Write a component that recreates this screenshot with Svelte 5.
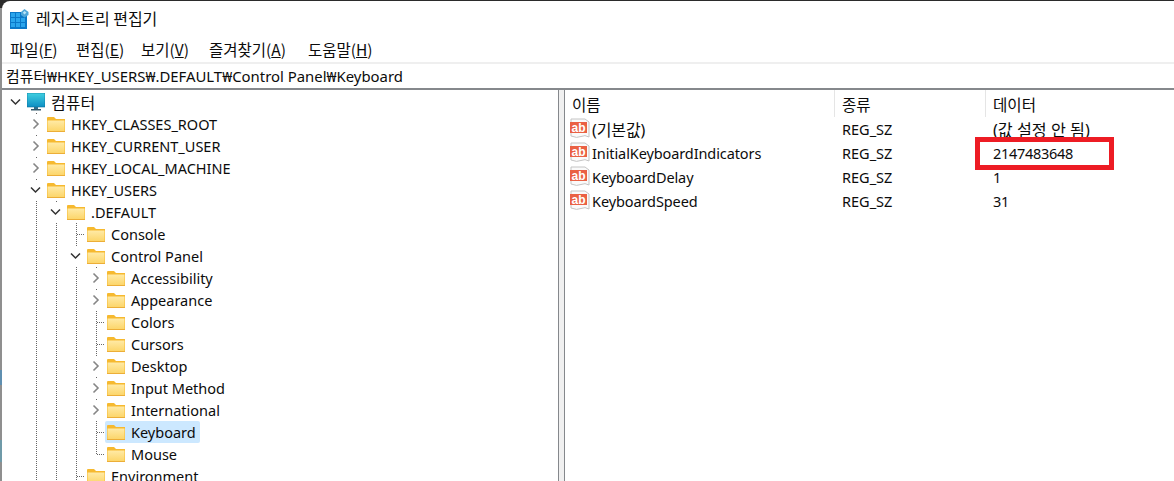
<script>
  const rows = [
    { l: 0, t: '컴퓨터', e: 'open', g: [], icon: 'pc' },
    { l: 1, t: 'HKEY_CLASSES_ROOT', e: 'closed', g: [], own: 'v' },
    { l: 1, t: 'HKEY_CURRENT_USER', e: 'closed', g: [], own: 'v' },
    { l: 1, t: 'HKEY_LOCAL_MACHINE', e: 'closed', g: [], own: 'v' },
    { l: 1, t: 'HKEY_USERS', e: 'open', g: [], own: 'v' },
    { l: 2, t: '.DEFAULT', e: 'open', g: [1], own: 'v' },
    { l: 3, t: 'Console', g: [1, 2], own: 'vh' },
    { l: 3, t: 'Control Panel', e: 'open', g: [1, 2], own: 'v' },
    { l: 4, t: 'Accessibility', e: 'closed', g: [1, 2, 3], own: 'v' },
    { l: 4, t: 'Appearance', e: 'closed', g: [1, 2, 3], own: 'v' },
    { l: 4, t: 'Colors', g: [1, 2, 3], own: 'vh' },
    { l: 4, t: 'Cursors', g: [1, 2, 3], own: 'vh' },
    { l: 4, t: 'Desktop', e: 'closed', g: [1, 2, 3], own: 'v' },
    { l: 4, t: 'Input Method', e: 'closed', g: [1, 2, 3], own: 'v' },
    { l: 4, t: 'International', e: 'closed', g: [1, 2, 3], own: 'v' },
    { l: 4, t: 'Keyboard', g: [1, 2, 3], own: 'vh', sel: true },
    { l: 4, t: 'Mouse', g: [1, 2, 3], own: 'last' },
    { l: 3, t: 'Environment', g: [1, 2], own: 'vh' }
  ];
  const menus = [
    ['파일', 'F'],
    ['편집', 'E'],
    ['보기', 'V'],
    ['즐겨찾기', 'A'],
    ['도움말', 'H']
  ];
  const values = [
    { n: '(기본값)', d: '(값 설정 안 됨)', ko: true },
    { n: 'InitialKeyboardIndicators', d: '2147483648' },
    { n: 'KeyboardDelay', d: '1' },
    { n: 'KeyboardSpeed', d: '31' }
  ];
</script>

<div class="desk">
  <div class="win">
    <header class="title">
      <svg class="regicon" width="19" height="19" viewBox="0 0 19 19">
        <rect x="0" y="3" width="17" height="17" fill="#0a78c8" />
        <g fill="#2aa5ec">
          <rect x="1" y="4" width="4" height="4" /><rect x="6" y="4" width="4" height="4" />
          <rect x="1" y="9" width="4" height="4" /><rect x="6" y="9" width="4" height="4" /><rect x="11" y="9" width="4" height="4" />
          <rect x="1" y="14" width="4" height="4" /><rect x="6" y="14" width="4" height="4" /><rect x="11" y="14" width="4" height="4" />
        </g>
        <path d="M14.5 0 18.5 3 18.5 6 14.5 8.500 11 6 11 3Z" fill="#4fa6d8" />
        <path d="M14.500 2 16.500 3.500 14.500 5.500 12.800 3.800Z" fill="#b9e3f7" />
      </svg>
      <span>레지스트리 편집기</span>
    </header>
    <nav class="menu">
      {#each menus as m}
        <span class="mi">{m[0]}(<u>{m[1]}</u>)</span>
      {/each}
    </nav>
    <div class="addr">컴퓨터₩HKEY_USERS₩.DEFAULT₩Control Panel₩Keyboard</div>
    <div class="panes">
      <div class="tree">
        {#each rows as r}
          <div class="row">
            {#each Array(r.l) as _, i}
              <span class="cell" class:v={r.g.includes(i)}></span>
            {/each}
            <span class="cell" class:v={r.own === 'v' || r.own === 'vh'} class:h={r.own === 'vh'} class:last={r.own === 'last'}>
              {#if r.e === 'open'}
                <svg class="chev" width="20" height="20" viewBox="0 0 20 20"><path d="M5 7.500 9.500 12 14 7.500" fill="none" stroke="#333" stroke-width="1.500" /></svg>
              {:else if r.e === 'closed'}
                <svg class="chev" width="20" height="20" viewBox="0 0 20 20"><path d="M7.500 5.500 12 10 7.500 14.500" fill="none" stroke="#868686" stroke-width="1.600" /></svg>
              {/if}
            </span>
            <span class="item" class:sel={r.sel}>
              {#if r.icon === 'pc'}
                <svg class="ic" width="18" height="19" viewBox="0 0 18 19">
                  <defs><linearGradient id="scr" x1="0" y1="0" x2="0" y2="1"><stop offset="0" stop-color="#3fd0e0" /><stop offset="1" stop-color="#0f8fc4" /></linearGradient></defs>
                  <rect x="0" y="0" width="18" height="14" fill="url(#scr)" stroke="#0b6f96" stroke-width="0.600" />
                  <rect x="7" y="14" width="4" height="2" fill="#2d6e8c" />
                  <rect x="4" y="16" width="10" height="1.500" fill="#33586a" />
                </svg>
              {:else}
                <svg class="ic" width="18" height="15" viewBox="0 0 18 15">
                  <defs><linearGradient id="fold" x1="0" y1="0" x2="0" y2="1"><stop offset="0" stop-color="#ffeaa6" /><stop offset="1" stop-color="#fcd568" /></linearGradient></defs>
                  <path d="M0 1Q0 0 1 0H7L9 2H18V15H0Z" fill="#f6b92f" />
                  <rect x="0.500" y="3.500" width="17" height="11" fill="url(#fold)" />
                  <path d="M0 14.500H18" stroke="#ecae38" />
                </svg>
              {/if}
              <span class="lbl" class:ko={r.icon === 'pc'}>{r.t}</span>
            </span>
          </div>
        {/each}
      </div>
      <div class="split"></div>
      <div class="list">
        <div class="lr lh">
          <span class="c1">이름</span><span class="c2">종류</span><span class="c3">데이터</span>
        </div>
        {#each values as v}
          <div class="lr">
            <span class="c1">
              <svg class="ab" width="20" height="20" viewBox="0 0 20 20">
                <path d="M1 1H15L19 4V19Q15 16.500 11 18.500T1 18Z" fill="#fafafa" stroke="#c4c4c4" />
                <rect x="0" y="4" width="17" height="11" fill="#ea6144" />
                <text x="8.500" y="13.500" text-anchor="middle" class="abt">ab</text>
              </svg>
              <span class="name" class:ko={v.ko}>{v.n}</span>
            </span>
            <span class="c2">REG_SZ</span>
            <span class="c3" class:kod={v.ko} class:num={!v.ko}>{v.d}</span>
          </div>
        {/each}
        <div class="mark"></div>
      </div>
    </div>
  </div>
</div>

<style>
  :global(body) {
    margin: 0;
    background: #fff;
  }
  .desk {
    width: 1174px;
    height: 481px;
    overflow: hidden;
    padding: 1px 0 0 2px;
    box-sizing: border-box;
    background: linear-gradient(to bottom, #2b2b2b 0 8px, #8f8f8f 8px 370px, #5f8fb0 370px 385px, #8f8f8f 385px 440px, #6f9aa8 440px 462px, #8f8f8f 462px);
    font-family: "Noto Sans", "Noto Sans CJK KR", sans-serif;
    font-size: 14.500px;
    color: #0c0c0c;
  }
  .win {
    background: #fff;
    border-top-left-radius: 8px;
    height: 480px;
    display: flex;
    flex-direction: column;
    overflow: hidden;
  }
  .title {
    height: 33px;
    flex: none;
    display: flex;
    align-items: center;
    padding-left: 8px;
    gap: 7px;
    font-family: "Noto Sans CJK KR", sans-serif;
    font-size: 16px;
  }
  .regicon {
    margin-top: 2px;
    overflow: visible;
  }
  .menu {
    height: 28px;
    flex: none;
    display: grid;
    grid-template-columns: 66px 65px 68px 99px auto;
    align-items: center;
    padding: 2px 0 0 8px;
    box-sizing: border-box;
    font-family: "Noto Sans CJK KR", sans-serif;
    font-size: 15.500px;
  }
  .addr {
    height: 24px;
    flex: none;
    border-top: 2px solid #efefef;
    border-bottom: 2px solid #85888c;
    padding-left: 4px;
    line-height: 24px;
    font-size: 14.900px;
    white-space: nowrap;
  }
  .panes {
    flex: 1;
    display: flex;
    min-height: 0;
  }
  .tree {
    width: 556px;
    flex: none;
    padding: 1px 0 0 4px;
    box-sizing: border-box;
    overflow: hidden;
  }
  .row {
    height: 22px;
    display: flex;
  }
  .cell {
    width: 20px;
    height: 22px;
    flex: none;
    display: flex;
    align-items: center;
    justify-content: center;
  }
  .cell.v {
    background: repeating-linear-gradient(to bottom, #666 0 1px, transparent 1px 2px) 10px 0 / 1px 100% no-repeat;
  }
  .cell.h {
    background:
      repeating-linear-gradient(to bottom, #666 0 1px, transparent 1px 2px) 10px 0 / 1px 100% no-repeat,
      repeating-linear-gradient(to right, #666 0 1px, transparent 1px 2px) 11px 11px / 8px 1px no-repeat;
  }
  .cell.last {
    background:
      repeating-linear-gradient(to bottom, #666 0 1px, transparent 1px 2px) 10px 0 / 1px 12px no-repeat,
      repeating-linear-gradient(to right, #666 0 1px, transparent 1px 2px) 11px 11px / 8px 1px no-repeat;
  }
  .chev {
    background: #fff;
    display: block;
  }
  .item {
    display: flex;
    align-items: center;
    height: 22px;
    padding: 0 4px 0 1px;
    gap: 6px;
    white-space: nowrap;
    border-radius: 2px;
  }
  .item.sel {
    background: #cce8ff;
    margin-left: -1px;
    padding-left: 2px;
  }
  .ic {
    flex: none;
    display: block;
  }
  .ko {
    font-size: 16px;
  }
  .kod {
    font-size: 16.200px;
  }
  .split {
    width: 5px;
    flex: none;
    background: #f0f0f0;
    border-left: 1px solid #85888c;
    border-right: 1px solid #85888c;
  }
  .list {
    flex: 1;
    position: relative;
  }
  .lr {
    display: flex;
    height: 24px;
    align-items: center;
  }
  .lh {
    height: 27px;
  }
  .c1,
  .c2,
  .c3 {
    box-sizing: border-box;
    display: flex;
    align-items: center;
    height: 100%;
    padding-left: 7px;
    white-space: nowrap;
  }
  .c1 {
    width: 270px;
  }
  .c2 {
    width: 151px;
  }
  .c3 {
    flex: 1;
  }
  .num {
    letter-spacing: -0.300px;
  }
  .name {
    letter-spacing: -0.100px;
  }
  .lh span {
    font-family: "Noto Sans CJK KR", sans-serif;
    font-size: 15.600px;
  }
  .lh .c1,
  .lh .c2 {
    border-right: 1px solid #e5e5e5;
  }
  .lr:not(.lh) .c1 {
    padding-left: 5px;
    gap: 2px;
  }
  .ab {
    flex: none;
    display: block;
    margin-top: -2px;
  }
  .abt {
    font-family: "Liberation Sans", sans-serif;
    font-weight: 700;
    font-size: 12px;
    fill: #fff;
  }
  .mark {
    position: absolute;
    left: 410px;
    top: 47px;
    width: 139px;
    height: 33px;
    box-sizing: border-box;
    border: 5px solid #ed1c24;
  }
</style>
